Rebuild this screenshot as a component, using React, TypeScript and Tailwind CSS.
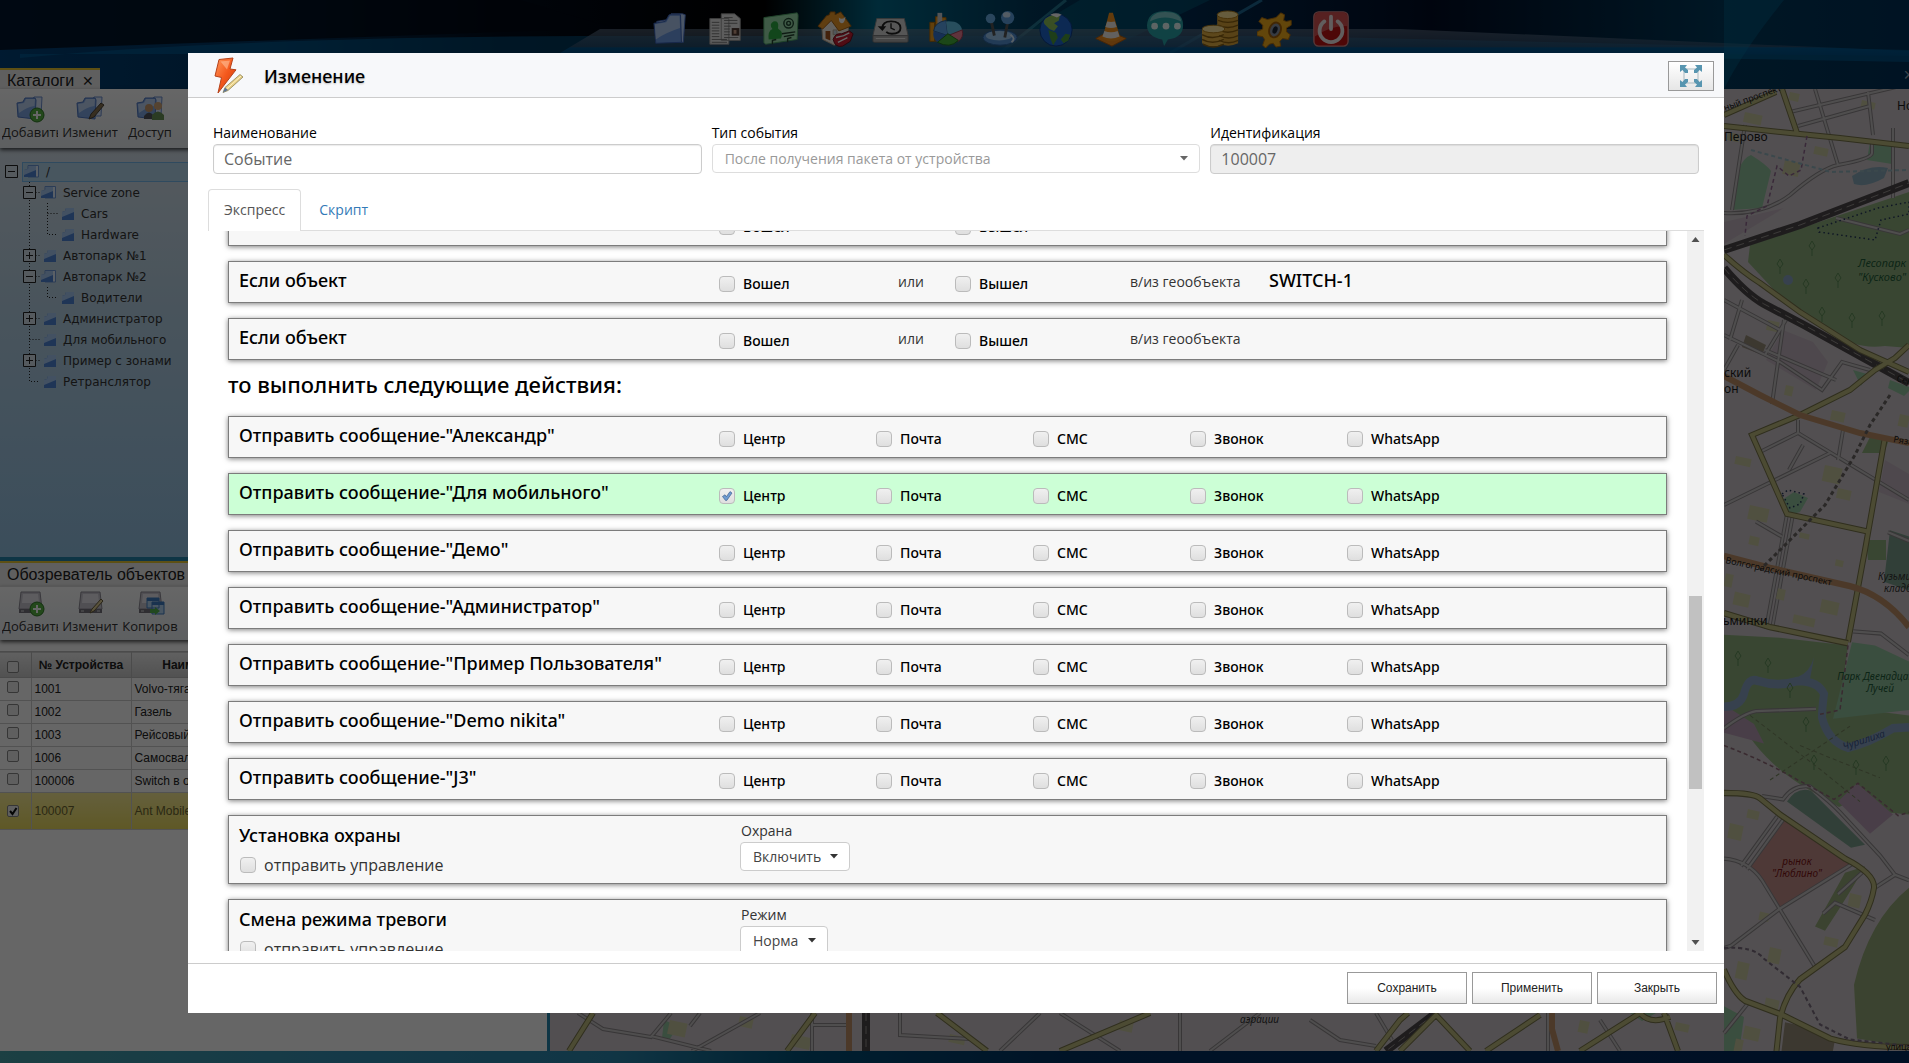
import type { ReactNode } from "react";
import clsx from "clsx";

const CHANNELS = ["Центр", "Почта", "СМС", "Звонок", "WhatsApp"];

const RECIPIENTS = [
  { name: "Александр", checked: [] as string[] },
  { name: "Для мобильного", checked: ["Центр"] },
  { name: "Демо", checked: [] },
  { name: "Администратор", checked: [] },
  { name: "Пример Пользователя", checked: [] },
  { name: "Demo nikita", checked: [] },
  { name: "J3", checked: [] },
];

const DEVICES = [
  { id: "1001", name: "Volvo-тягач" },
  { id: "1002", name: "Газель" },
  { id: "1003", name: "Рейсовый" },
  { id: "1006", name: "Самосвал" },
  { id: "100006", name: "Switch в офисе" },
  { id: "100007", name: "Ant Mobile", selected: true },
];

export default function App() {
  return (
    <div className="relative flex h-screen flex-col overflow-hidden bg-[#00172e] font-['Open_Sans',sans-serif] text-sm text-black">
      <Wallpaper />
      <Dock />
      <div className="relative isolate flex min-h-0 flex-1">
        <div className="flex w-[547px] shrink-0 flex-col">
          <Catalogs />
          <ObjectBrowser />
        </div>
        <div className="mt-[29px] w-[3px] shrink-0 bg-[#2585ad]" />
        <div className="flex min-w-0 flex-1 flex-col">
          <div className="flex h-[29px] items-center justify-end font-['Liberation_Sans',sans-serif] text-lg text-white/60">
            <button className="-mr-[5px]" aria-label="Закрыть карту">
              ×
            </button>
          </div>
          <CityMap />
        </div>
      </div>
      <div className="h-3 shrink-0" />

      <div className="absolute inset-0 flex bg-black/60 pt-[53px] pr-[185px] pb-[50px] pl-[188px]">
        <EventDialog />
      </div>
    </div>
  );
}

/* ---------- dialog ---------- */

function EventDialog() {
  return (
    <div role="dialog" aria-labelledby="dialog-title" className="flex min-w-0 flex-1 flex-col bg-white">
      <header className="flex h-[45px] shrink-0 items-center border-b border-[#ccc] bg-[#f7f8fa] pt-[2px] pr-[10px] pl-6">
        <BoltIcon />
        <h1
          id="dialog-title"
          className="ml-[18px] flex-1 font-['Noto_Sans',sans-serif] text-lg leading-6 font-medium [text-shadow:0_1px_2px_rgba(0,0,0,0.25)]"
        >
          Изменение
        </h1>
        <button
          aria-label="Развернуть"
          className="flex h-[30px] w-[46px] items-center justify-center border border-[#999] bg-linear-to-b from-white to-[#e6e6e6]"
        >
          <ExpandIcon />
        </button>
      </header>

      <form className="flex min-h-0 flex-1 flex-col" onSubmit={(e) => e.preventDefault()}>
        <div className="grid grid-cols-3 gap-[10px] px-[25px] pt-[25px]">
          <div>
            <label htmlFor="name" className="mb-px block leading-5">
              Наименование
            </label>
            <input
              id="name"
              defaultValue="Событие"
              className="h-[30px] w-full rounded-sm border border-[#ccc] px-[10px] text-base text-[#666] shadow-[inset_0_1px_1px_rgba(0,0,0,0.08)]"
            />
          </div>
          <div>
            <label htmlFor="type" className="mb-px block leading-5">
              Тип события
            </label>
            <div className="relative">
              <select
                id="type"
                className="h-[29px] w-full appearance-none rounded-sm border border-[#ddd] bg-white px-3 text-[#999]"
              >
                <option>После получения пакета от устройства</option>
              </select>
              <Caret className="absolute top-3 right-3 text-[#666]" />
            </div>
          </div>
          <div>
            <label htmlFor="ident" className="mb-px block leading-5">
              Идентификация
            </label>
            <input
              id="ident"
              defaultValue="100007"
              readOnly
              className="h-[30px] w-full rounded-sm border border-[#ccc] bg-[#eee] px-[10px] text-base text-[#666] shadow-[inset_0_1px_1px_rgba(0,0,0,0.08)]"
            />
          </div>
        </div>

        <div role="tablist" className="mx-5 mt-[15px] flex h-[42px] shrink-0 border-b border-[#ddd]">
          <button
            role="tab"
            aria-selected="true"
            className="-mb-px rounded-t-sm border border-b-0 border-[#ddd] bg-white px-[15px] pb-[2px] text-[#555]"
          >
            Экспресс
          </button>
          <button role="tab" aria-selected="false" className="ml-[2px] px-4 text-[#337ab7]">
            Скрипт
          </button>
        </div>

        <div className="mx-5 mb-3 flex min-h-0 flex-1">
          <div className="min-w-0 flex-1 overflow-hidden px-5">
            <div className="-mt-[27px] flex flex-col gap-[15px]">
              <ConditionRow />
              <ConditionRow zone="SWITCH-1" />
              <ConditionRow />
            </div>
            <h2 className="h-14 pt-2 font-['Noto_Sans',sans-serif] text-[22px] leading-8 font-medium">
              то выполнить следующие действия:
            </h2>
            <div className="flex flex-col gap-[15px]">
              {RECIPIENTS.map((r) => (
                <MessageRow key={r.name} name={r.name} checked={r.checked} />
              ))}
              <ControlRow title="Установка охраны" label="Охрана" value="Включить" id="guard" width="w-[110px]" />
              <ControlRow title="Смена режима тревоги" label="Режим" value="Норма" id="mode" width="w-[88px]" />
            </div>
          </div>
          <ScrollTrack />
        </div>

        <footer className="flex shrink-0 justify-end gap-[5px] border-t border-[#ccc] py-2 pr-[7px] pb-[9px] font-['Liberation_Sans',sans-serif] text-xs">
          {["Сохранить", "Применить", "Закрыть"].map((t) => (
            <button
              key={t}
              className="h-8 w-[120px] border border-[#999] bg-linear-to-b from-white from-50% to-[#e9e9e9] text-[#222]"
            >
              {t}
            </button>
          ))}
        </footer>
      </form>
    </div>
  );
}

function Card({ className, children }: { className?: string; children: ReactNode }) {
  return (
    <div
      className={clsx(
        "grid shrink-0 border border-[#7c7c7c] pr-[5px] pl-[10px] shadow-[0_1px_5px_rgba(0,0,0,0.5)]",
        className,
      )}
    >
      {children}
    </div>
  );
}

function CardTitle({ children }: { children: ReactNode }) {
  return <p className="pb-1 font-['Noto_Sans',sans-serif] text-lg leading-6 font-medium">{children}</p>;
}

function ConditionRow({ zone }: { zone?: string }) {
  return (
    <Card className="h-[42px] grid-cols-[480px_179px_57px_175px_139px_1fr] items-center bg-[#f7f7f7]">
      <CardTitle>Если объект</CardTitle>
      <Check label="Вошел" />
      <span className="text-[#333]">или</span>
      <Check label="Вышел" />
      <span className="text-[#333]">в/из геообъекта</span>
      <CardTitle>{zone}</CardTitle>
    </Card>
  );
}

function MessageRow({ name, checked }: { name: string; checked: string[] }) {
  return (
    <Card
      className={clsx(
        "h-[42px] grid-cols-[480px_repeat(6,minmax(0,1fr))] items-center",
        checked.length ? "bg-[#ccffd6]" : "bg-[#f7f7f7]",
      )}
    >
      <CardTitle>Отправить сообщение-"{name}"</CardTitle>
      {CHANNELS.map((c) => (
        <Check key={c} label={c} checked={checked.includes(c)} />
      ))}
    </Card>
  );
}

function ControlRow(props: { title: string; label: string; value: string; id: string; width: string }) {
  return (
    <Card className="h-[69px] grid-cols-[501px_1fr] bg-[#f7f7f7]">
      <div className="pt-[7px]">
        <CardTitle>{props.title}</CardTitle>
        <label className="mt-[2px] flex items-center gap-2 pl-px text-base leading-6 text-[#333]">
          <Tick />
          отправить управление
        </label>
      </div>
      <div className="pt-[5px]">
        <label htmlFor={props.id} className="block pl-px leading-5 text-[#333]">
          {props.label}
        </label>
        <div className={clsx("relative mt-px", props.width)}>
          <select
            id={props.id}
            className="h-[29px] w-full appearance-none rounded-sm border border-[#ccc] bg-white px-3 text-[#444]"
          >
            <option>{props.value}</option>
          </select>
          <Caret className="absolute top-3 right-3 text-[#333]" />
        </div>
      </div>
    </Card>
  );
}

function Check({ label, checked }: { label: string; checked?: boolean }) {
  return (
    <label className="flex items-center gap-2 pt-[3px] font-['Noto_Sans',sans-serif] leading-5 font-medium">
      <Tick checked={checked} />
      {label}
    </label>
  );
}

function Tick({ checked }: { checked?: boolean }) {
  return (
    <span className="grid shrink-0">
      <input
        type="checkbox"
        defaultChecked={checked}
        className="peer col-start-1 row-start-1 size-4 appearance-none rounded-sm border border-[#bbb] bg-linear-to-b from-[#f0f0f0] to-[#dfdfdf]"
      />
      <svg
        viewBox="0 0 16 16"
        className="pointer-events-none invisible col-start-1 row-start-1 size-4 peer-checked:visible"
      >
        <path d="M3.5 8.5 6 6.8l1.3 2L11 3.6l2 1.4-5.2 7.4H6.500z" fill="#6d9bd1" stroke="#41638f" strokeWidth=".7" />
      </svg>
    </span>
  );
}

function Caret({ className }: { className?: string }) {
  return (
    <svg viewBox="0 0 8 5" className={clsx("pointer-events-none h-[5px] w-2", className)}>
      <path d="M0 0h8L4 4.500z" fill="currentColor" />
    </svg>
  );
}

function ScrollTrack() {
  return (
    <div className="flex w-[17px] shrink-0 flex-col bg-[#f1f1f1]">
      <svg viewBox="0 0 17 17" className="h-[17px] w-[17px]">
        <path d="M4.500 11h8L8.500 6z" fill="#505050" />
      </svg>
      <div className="flex-[348]" />
      <div className="mx-[2px] flex-[193] bg-[#c1c1c1]" />
      <div className="flex-[145]" />
      <svg viewBox="0 0 17 17" className="h-[17px] w-[17px]">
        <path d="M4.500 6h8L8.500 11z" fill="#505050" />
      </svg>
    </div>
  );
}

function BoltIcon() {
  return (
    <svg viewBox="0 0 34 40" className="h-10 w-[34px]">
      <defs>
        <linearGradient id="bolt" x1="0" y1="0" x2="1" y2="1">
          <stop offset="0" stopColor="#ff9a5c" />
          <stop offset=".5" stopColor="#f4581c" />
          <stop offset="1" stopColor="#c93a08" />
        </linearGradient>
      </defs>
      <path d="M7 3.500 21 2l-3 11 6 .8L6 37l3.500-15.500L3 20z" fill="url(#bolt)" stroke="#b5421a" />
      <path d="M8.500 5.500 18 4.500l-3 9z" fill="#ffc09a" opacity=".6" />
      <path d="M28 18.500 31 21 16 34.500l-5 2 2-5z" fill="#e8cf86" stroke="#8d8456" strokeWidth=".8" />
      <path d="M29 20 14 33.500" stroke="#fff3c4" strokeWidth="1" />
      <path d="m11 36.500 2-5 3 2.500z" fill="#5b7396" />
    </svg>
  );
}

function ExpandIcon() {
  return (
    <svg viewBox="0 0 24 24" className="size-6" fill="#5795b0">
      <path d="M5 5h14v14H5z" fill="none" stroke="#a9b9c0" />
      <path d="M1 1h7L6 3.500 9 6v3H6L3.500 6 1 8zM23 1h-7l2 2.500L15 6v3h3l2.500-3L23 8zM1 23h7l-2-2.500L9 18v-3H6l-2.500 3L1 16zM23 23h-7l2-2.500-3-2.500v-3h3l2.500 3 2.500-2z" />
    </svg>
  );
}

/* ---------- left side ---------- */

function ToolButton({ label, children }: { label: string; children: ReactNode }) {
  return (
    <button className="flex w-[60px] flex-col items-center">
      <svg viewBox="0 0 30 28" className="h-7 w-[30px]">
        {children}
      </svg>
      <span className="block max-w-[56px] overflow-hidden text-[13px] leading-[18px] whitespace-nowrap text-[#333]">
        {label}
      </span>
    </button>
  );
}

function Catalogs() {
  return (
    <section className="flex h-[501px] shrink-0 flex-col">
      <div className="flex h-[29px] items-end">
        <h2 className="flex h-[21px] w-[100px] items-center gap-2 border-t-2 border-[#e8c832] bg-[#eee] pt-[2px] pl-[7px] font-['Liberation_Sans',sans-serif] text-base leading-5 text-[#222]">
          Каталоги <button className="text-sm leading-4">✕</button>
        </h2>
      </div>
      <div className="relative z-10 flex h-[59px] shrink-0 bg-linear-to-b from-white to-[#e9eef2] pt-[6px] shadow-[0_2px_4px_rgba(0,0,0,0.7)]">
        <ToolButton label="Добавить">
          <FolderShapes />
          <PlusBadge />
        </ToolButton>
        <ToolButton label="Изменит">
          <FolderShapes />
          <path d="m14 24 2-5L26 8l3 2-10 12z" fill="#8b7350" stroke="#4a4236" />
        </ToolButton>
        <ToolButton label="Доступ">
          <FolderShapes />
          <circle cx="14" cy="13" r="4" fill="#c79a6b" />
          <path d="M9 24v-3q5-7 10 0v3z" fill="#50545c" />
          <circle cx="23" cy="11" r="4" fill="#d5a878" />
          <path d="M17 25v-5q6-7 12 0v5z" fill="#6a9458" />
        </ToolButton>
      </div>
      <div className="flex-1 bg-linear-to-b from-[#d4e0ea] via-[#b6d2e6] via-40% to-[#94c2e4] pt-[13px] font-['DejaVu_Sans',sans-serif] text-xs text-[#333]">
        <ul>
          <TreeRow root open label="/" />
          <TreeRow level={1} toggle="minus" open label="Service zone" />
          <TreeRow level={2} label="Cars" />
          <TreeRow level={2} label="Hardware" last />
          <TreeRow level={1} toggle="plus" label="Автопарк №1" />
          <TreeRow level={1} toggle="minus" open label="Автопарк №2" />
          <TreeRow level={2} label="Водители" last />
          <TreeRow level={1} toggle="plus" label="Администратор" />
          <TreeRow level={1} label="Для мобильного" />
          <TreeRow level={1} toggle="plus" label="Пример с зонами" />
          <TreeRow level={1} label="Ретранслятор" last />
        </ul>
      </div>
      <div className="h-1 shrink-0 bg-[#2585ad]" />
    </section>
  );
}

function TreeRow(props: {
  label: string;
  level?: number;
  toggle?: "plus" | "minus";
  root?: boolean;
  open?: boolean;
  last?: boolean;
}) {
  const { label, level = 0, toggle, root, open, last } = props;
  return (
    <li className="flex h-[21px] items-center">
      {level === 2 && (
        <svg className="h-[21px] w-9 shrink-0" stroke="#222" strokeDasharray="1 2" fill="none">
          <path d="M29.500 0v21" />
        </svg>
      )}
      <svg
        className={clsx("h-[21px] shrink-0", level === 1 ? "w-10" : "w-[22px]")}
        stroke="#222"
        fill="none"
      >
        {level === 1 && (
          <path d={last ? "M29.500 0v10.500H40" : "M29.500 0v21M29.500 10.500H40"} strokeDasharray="1 2" />
        )}
        {level === 2 && <path d={last ? "M11.500 0v10.500H22" : "M11.500 0v21M11.500 10.500H22"} strokeDasharray="1 2" />}
        {root && <path d="M5.500 4.500h12v12h-12zM8 10.500h7" fill="#d4e0ea" />}
        {toggle && <path d="M23.500 4.500h12v12h-12z" fill="#d4e0ea" />}
        {toggle && <path d={toggle === "plus" ? "M26 10.500h7M29.500 7v7" : "M26 10.500h7"} />}
      </svg>
      <span
        className={clsx(
          "flex h-5 flex-1 items-center gap-[6px]",
          root && "border border-[#77b8ee] bg-[#b4d6ee]",
        )}
      >
        <svg viewBox="0 0 17 16" className="h-4 w-[17px]">
          {open ? (
            <>
              <path d="M5 1.500h10.500V13H5z" fill="#e3efff" stroke="#6d96d6" />
              <path d="m1 6 4-1 1-3h7v11H1z" fill="#4f86d6" />
              <path d="m1 6 4-1 1-3h7v4L1 11z" fill="#a9cbf5" />
            </>
          ) : (
            <>
              <path d="m4 6 3-1 1-3h8v12H4z" fill="#4f86d6" />
              <path d="m4 6 3-1 1-3h8v4L4 11z" fill="#a9cbf5" />
            </>
          )}
        </svg>
        {label}
      </span>
    </li>
  );
}

function ObjectBrowser() {
  return (
    <section className="flex min-h-0 flex-1 flex-col bg-white">
      <h2 className="h-[25px] shrink-0 border-t-2 border-[#e8c832] bg-[#eee] pl-[7px] font-['Liberation_Sans',sans-serif] text-base leading-6 text-[#222]">
        Обозреватель объектов
      </h2>
      <div className="flex h-[54px] shrink-0 border-t border-[#ddd] bg-linear-to-b from-white to-[#e9eef2] pt-[2px] shadow-[0_2px_4px_rgba(0,0,0,0.7)]">
        <ToolButton label="Добавить">
          <DeviceShape />
          <PlusBadge />
        </ToolButton>
        <ToolButton label="Изменит">
          <DeviceShape />
          <path d="m15 24 2-4 9-10 2 2-9 10z" fill="#e2cf96" stroke="#665b3c" />
        </ToolButton>
        <ToolButton label="Копиров">
          <DeviceShape />
          <path d="M12 9h12v10H12zM17 13h12v12H17z" fill="#b7d6f5" stroke="#3f7ec4" />
          <path d="M12 9h12v3H12zM17 13h12v3H17z" fill="#3f7ec4" />
          <path d="M15 20h5v-2l5 4-5 4v-2h-5z" fill="#54b34e" />
        </ToolButton>
      </div>
      <table className="mt-[11px] w-full table-fixed border-collapse text-left font-['Liberation_Sans',sans-serif] text-xs text-[#222]">
        <thead>
          <tr className="h-[26px] border-y border-[#bbb] bg-linear-to-b from-[#f0f0f0] to-[#ccc]">
            <th className="w-[31px] pt-1 pl-[7px]">
              <DeviceCheck label="Все устройства" />
            </th>
            <th className="w-[100px] border-x border-[#bbb] text-center">№ Устройства</th>
            <th className="w-[150px] text-center">Наименование</th>
            <th />
          </tr>
        </thead>
        <tbody>
          {DEVICES.map((d) => (
            <tr
              key={d.id}
              className={clsx(
                "border-b border-[#ccc]",
                d.selected ? "h-[37px] bg-linear-to-b from-[#fbee97] to-[#eddd5e] text-[#6b6530]" : "h-[23px]",
              )}
            >
              <td className={clsx("pl-[7px]", d.selected ? "pt-0" : "pb-[5px]")}>
                <DeviceCheck label={d.id} checked={d.selected} />
              </td>
              <td className="border-x border-[#ccc] pl-[3px]">{d.id}</td>
              <td className="pl-[3px] whitespace-nowrap">{d.name}</td>
              <td />
            </tr>
          ))}
        </tbody>
      </table>
    </section>
  );
}

function DeviceCheck({ label, checked }: { label: string; checked?: boolean }) {
  return (
    <span className="grid w-3">
      <input
        type="checkbox"
        aria-label={label}
        defaultChecked={checked}
        className="peer col-start-1 row-start-1 size-3 appearance-none rounded-xs border border-[#888] bg-[#ededed]"
      />
      <svg viewBox="0 0 12 12" className="pointer-events-none invisible col-start-1 row-start-1 size-3 peer-checked:visible">
        <path d="m3 6 2.500 3L9.500 3" fill="none" stroke="#111" strokeWidth="2" />
      </svg>
    </span>
  );
}

function FolderShapes() {
  return (
    <g>
      <path d="M9 5h8l2-3h8l-1 19H9z" fill="#dbe9ff" stroke="#6d8fd0" />
      <path d="m2 8 6-1 2-4h10l1 2-1 19-17-2z" fill="#7fa8e6" stroke="#4f77c4" />
      <path d="m3 9 6-1 2-4h9l-.5 7Q12 12 4 18z" fill="#cfe0fa" opacity=".8" />
    </g>
  );
}

function PlusBadge() {
  return (
    <g>
      <circle cx="22" cy="20" r="7" fill="#58b544" stroke="#2f7a26" />
      <path d="M22 16v8M18 20h8" stroke="#fff" strokeWidth="2" />
    </g>
  );
}

function DeviceShape() {
  return (
    <g>
      <path d="M6 3h19l2 17H4z" fill="#c9c6d0" stroke="#8f8c96" />
      <path d="M8 5h15l1 9H7z" fill="#e9e7ee" />
      <path d="M4 20h23v4H4z" fill="#77747e" />
      <path d="M6 22h3M22 22h3" stroke="#ddd" />
    </g>
  );
}

/* ---------- desktop ---------- */

function Wallpaper() {
  return (
    <svg viewBox="0 0 1909 1063" preserveAspectRatio="none" className="absolute inset-0 h-full w-full">
      <defs>
        <linearGradient id="sky" x1="0" x2="1">
          <stop offset="0" stopColor="#00427a" />
          <stop offset=".14" stopColor="#003560" />
          <stop offset=".26" stopColor="#000c1c" />
          <stop offset=".4" stopColor="#000" />
          <stop offset=".46" stopColor="#006a8c" />
          <stop offset=".54" stopColor="#003a5c" />
          <stop offset=".62" stopColor="#002b52" />
          <stop offset=".75" stopColor="#000c24" />
          <stop offset=".9" stopColor="#003a5c" />
          <stop offset="1" stopColor="#003058" />
        </linearGradient>
        <linearGradient id="glass" x1="0" y1="0" x2="0" y2="1">
          <stop offset="0" stopColor="#6a7d92" stopOpacity=".6" />
          <stop offset=".65" stopColor="#3d5878" stopOpacity=".6" />
          <stop offset=".7" stopColor="#005a96" stopOpacity=".8" />
          <stop offset="1" stopColor="#005088" stopOpacity=".8" />
        </linearGradient>
        <linearGradient id="floor" x1="0" x2="1">
          <stop offset="0" stopColor="#46a0a8" />
          <stop offset=".18" stopColor="#3590b4" />
          <stop offset=".32" stopColor="#2a86ac" />
          <stop offset=".42" stopColor="#005078" />
          <stop offset=".56" stopColor="#003060" />
          <stop offset="1" stopColor="#00285a" />
        </linearGradient>
      </defs>
      <rect width="1909" height="90" fill="url(#sky)" />
      <path d="M1080 0h130l-110 53H990z" fill="#007a96" opacity=".35" />
      <path d="m1066 0-66 53" stroke="#3aa0b8" strokeWidth="3" opacity=".6" />
      <path d="m1262 0-92 53" stroke="#2a86b4" strokeWidth="3" opacity=".7" />
      <path d="M0 0h520l100 30H560L0 50z" fill="#000814" opacity=".75" />
      <path d="M20 58q200-20 560-22h700l629 14v12q-400-8-700-8H20z" fill="#0070b0" opacity=".45" />
      <path d="M600 29h800l509 22v5q-300-3-540-3H560z" fill="url(#glass)" />
      <path d="M1724 89q20-40 60-89h-60z" fill="#0086b4" opacity=".3" />
      <rect y="1051" width="1909" height="12" fill="url(#floor)" />
    </svg>
  );
}

function Dock() {
  const icons = [
    <>
      <path d="M5 12 17 10l3-6h12l3 1-2 29-25-1z" fill="#bcd6ff" stroke="#4a74d0" />
      <path d="m2 14 12-2 4-7h12l1 29-27 1z" fill="#6f9ee8" stroke="#3b62b8" />
      <path d="m3 15 12-2 4-7h10l.5 13Q14 24 4 31z" fill="#c8dcfa" opacity=".75" />
    </>,
    <>
      <path d="M3 9h20v27H3zM15 4h14l6 5v23H15z" fill="#e8e8e8" stroke="#999" />
      <path d="M5 13h8M5 16h8M5 19h8M5 22h8M5 25h8M5 28h8M5 31h16M5 34h16M18 8h9M18 11h14M18 14h14M18 17h7M18 20h6M18 23h6M18 26h6M18 29h15" stroke="#777" />
      <path d="M26 19h8v8h-8z" fill="#4e3a34" />
      <path d="M28 21h3v4h-3z" fill="#c89c84" />
    </>,
    <>
      <path d="m2 8 35-5q1 1 1 3l-1 25-33 5q-1 0-2-2z" fill="#9fe0b0" stroke="#4fa868" />
      <path d="M7 31q-1-9 4-11-4-5 1-8 6-1 5 6-1 2 3 4 2 3 0 8z" fill="#2fae44" />
      <circle cx="28" cy="14" r="5" fill="none" stroke="#234b35" strokeWidth="1.500" />
      <circle cx="28" cy="14" r="2" fill="none" stroke="#234b35" strokeWidth="1.500" />
      <path d="m21 25 14-2M23 28l11-2M11 36v-4l4-1M27 34v-4l4-1" fill="none" stroke="#24432f" strokeWidth="1.500" />
    </>,
    <>
      <path d="m5 17 12-8 16 8v14l-15 6-12-6z" fill="#f8f2e8" stroke="#b8a690" />
      <path d="m1 17 9-11 3-1 1-3h5v3l6-3 11 15-13 5-8-11-9 9z" fill="#f19c2a" stroke="#a55f10" />
      <path d="M9 22h5v10l-5-2z" fill="#a8561e" />
      <path d="M17 21h4v5h-4z" fill="#c9d6e4" stroke="#b8a690" />
      <path d="M23 8q3 3 7-1-1 7-4 7t-3-6z" fill="#fff" />
      <path d="M17 31q2-7 9-6l8-3 4 3-3 8-8 5q-8 2-10-7z" fill="#c81e32" stroke="#6c0c18" />
      <path d="m20 29 8-2 6-3M22 34l10-5" stroke="#fff" strokeWidth="1.500" />
    </>,
    <>
      <path d="M5 9h29l4 18H1z" fill="#d8d8d8" stroke="#8c8c8c" />
      <path d="M1 27h37v6q0 1-2 1H3q-2 0-2-1z" fill="#b0b0b0" stroke="#777" />
      <path d="M4 30h31" stroke="#eee" />
      <path d="M11 19q0-7 9-7 10 0 10 7 0 6-9 6-4 0-6-2" fill="none" stroke="#222" strokeWidth="2" />
      <path d="m6 17 5 5 4-5z" fill="#222" />
      <path d="M20 14v5l4 2" fill="none" stroke="#222" strokeWidth="1.500" />
    </>,
    <>
      <path d="M3 13h5v20H3zM9 7h5v26H9zM15 8h5v16h-5z" fill="#f3a020" stroke="#aa6508" />
      <path d="M11 3h5v20h-5z" fill="#cfd2d8" />
      <path d="M22 27 7 22q1-9 13-11z" fill="#5ca5ea" stroke="#2c639f" />
      <path d="m22 27-2-15q16-1 17 10z" fill="#65c3e9" />
      <path d="m22 27 15-6q2 8-4 12z" fill="#ee7f96" stroke="#a43c54" />
      <path d="m22 27-11 7q-6-5-4-12z" fill="#3976d2" />
      <path d="m22 25 11 7q-9 9-22 2z" fill="#47b23c" stroke="#23701f" />
    </>,
    <>
      <ellipse cx="19" cy="29" rx="18" ry="8" fill="#5695d8" stroke="#2a5f9c" />
      <ellipse cx="18" cy="27" rx="14" ry="5" fill="#9fcbf3" />
      <path d="m10 13 3 14M27 13l-3 16" stroke="#555" strokeWidth="3" />
      <circle cx="9" cy="9" r="5" fill="#6aaee8" />
      <circle cx="27" cy="8" r="7" fill="#5fa4e4" />
      <ellipse cx="26" cy="5" rx="4" ry="3" fill="#cfe6fb" />
      <path d="M30 26q6 4 1 8" fill="none" stroke="#dcefff" strokeWidth="2" />
    </>,
    <>
      <circle cx="20" cy="21" r="17" fill="#1f68d0" stroke="#0c3a86" />
      <path d="M9 9q8-6 15-3l-1 5-5 3 4 3-4 5-5-2-5-5q-2-3 1-6z" fill="#8ec45a" />
      <path d="m12 21 8 3 2 5-5 8-3-7zM30 25l5 1-2 6-5 3-3-4z" fill="#4c9c40" />
      <path d="M14 5q6-3 12 0l-5 3z" fill="#fff" />
    </>,
    <>
      <path d="m4 30 7-4h16l9 4-15 8z" fill="#ef8a1e" stroke="#b85d0a" />
      <path d="M18 3h4l8 27q-9 6-19 0z" fill="#f7941e" />
      <path d="m16 12-2 6q6 2 12 0l-2-6q-4 1-8 0zM13 22l-2 6q9 4 18 0l-2-6q-7 3-14 0z" fill="#f5f0ea" />
    </>,
    <>
      <path d="M19 1q19 0 19 15 0 13-16 15l-4 7-2-7Q0 28 0 16 1 1 19 1z" fill="#2aa5aa" />
      <path d="M19 2q16 0 17 10-9-4-17-4T3 12Q5 2 19 2z" fill="#a6dfe0" opacity=".7" />
      <g fill="#e8fbfb">
        <circle cx="8" cy="17" r="3.500" />
        <circle cx="20" cy="17" r="3.500" />
        <circle cx="32" cy="17" r="3.500" />
      </g>
    </>,
    <>
      <path d="M16 5v30q12 5 22 0V5z" fill="#dba63a" />
      <path d="M0 20v15q11 7 23 0V20z" fill="#e8b548" />
      <ellipse cx="27" cy="5" rx="11" ry="4" fill="#ffe59a" stroke="#b07c18" />
      <path d="M17 11q10 4 21 0M17 16q10 5 21 0M17 21q10 5 21 0M18 27q10 5 20 0M18 32q10 5 20 0" fill="none" stroke="#8d6212" strokeWidth="1.500" />
      <ellipse cx="12" cy="20" rx="12" ry="4" fill="#ffe9a4" stroke="#b07c18" />
      <path d="M0 26q11 6 23 0M0 31q11 6 23 0M1 36q11 6 22 0" fill="none" stroke="#8d6212" strokeWidth="1.500" />
    </>,
    <>
      <path
        d="m20 8 5-5 4 2-1 6 3 1 5-1 0 5-5 3v4l4 3-2 5-6-1-3 3 1 5-5 1-3-4-4 1-4 4-3-3 2-6-2-3-6-1 0-4 6-3 0-4-4-4 3-4 6 2z"
        fill="#f4ae1c"
        stroke="#b5700a"
      />
      <ellipse cx="19" cy="21" rx="6" ry="8" fill="#8b93a4" stroke="#a5620a" strokeWidth="2" transform="rotate(20 19 21)" />
      <ellipse cx="19" cy="21" rx="2.500" ry="4" fill="#1b2433" transform="rotate(20 19 21)" />
    </>,
    <>
      <rect x="2" y="2" width="36" height="36" rx="5" fill="#c01212" stroke="#d98a8a" strokeWidth="1.500" />
      <path d="M3 7q0-4 4-4h26q4 0 4 4v10Q20 16 3 28z" fill="#e88080" opacity=".6" />
      <path d="M13 12a12 12 0 1 0 14 0" fill="none" stroke="#f3eaea" strokeWidth="4" strokeLinecap="round" />
      <path d="M20 7v13" stroke="#f3eaea" strokeWidth="4" strokeLinecap="round" />
    </>,
  ];
  return (
    <nav className="relative flex h-[60px] shrink-0 justify-center gap-[17px] pt-[10px] pl-[93px]">
      {icons.map((icon, i) => (
        <button key={i} className="size-[38px]">
          <svg viewBox="0 0 40 40" className="size-full">
            {icon}
          </svg>
        </button>
      ))}
    </nav>
  );
}

/* ---------- map ---------- */

type Layer = { blocks: number[][]; white: string[]; yellow: string[]; orange: string[]; rails: string[] };

const NORTH: Layer = {
  blocks: [
    [1745, 112, 18, 10], [1790, 92, 10, 8], [1862, 100, 14, 7], [1815, 146, 14, 8], [1785, 160, 16, 14], [1728, 132, 12, 8],
    [1768, 320, 12, 10], [1786, 385, 8, 10], [1832, 410, 14, 10], [1900, 414, 10, 12], [1825, 465, 18, 16], [1838, 488, 14, 10],
    [1750, 505, 20, 14], [1736, 456, 16, 8],
    [670, 1020, 18, 14], [740, 1016, 14, 10], [792, 1034, 20, 12], [1580, 1020, 10, 12], [1676, 1022, 14, 8],
    [950, 1034, 16, 8], [1120, 1020, 14, 10],
  ],
  white: [
    "M1815 89 1838 165", "M1724 213q40 2 66-18 30-26 48-30 34-6 34-12v-10", "M1790 112 1909 84", "M1798 126 1870 106",
    "M1745 125 1732 210", "M1868 92 1873 135M1893 128v70", "M1836 218 1900 234 1909 230", "M1724 335 1780 362 1822 390 1842 362 1870 370",
    "M1738 345 1724 370", "M1724 300 1780 330M1742 300 1730 340M1786 320 1765 355M1765 350 1836 380M1784 320 1772 404",
    "M1724 505 1830 453M1760 452 1798 433 1909 500", "M1798 420v13M1843 430l-5 30M1803 445l-14 25", "M1787 514 1766 629M1793 514 1772 629",
    "M578 1013l25 16 48 8 20-24M651 1036l60 15M760 1013 692 1051M690 1026 700 1013M812 1025h36M812 1013v38",
    "M900 1013v22l70 4", "M1310 1020 1340 1040 1376 1046M1376 1013 1392 1040M1548 1013v38M1600 1020 1620 1051",
    "M1000 1051 1040 1013M1060 1013 1120 1051M1180 1013v38M1210 1051 1260 1013",
  ],
  yellow: [
    "M1724 115 1776 92", "M1724 126 1790 133 1840 138 1909 146", "M1782 89 1797 133", "M1724 255q20 18 36 28l40 29 60 38 49 22",
    "M1909 345l-14 13-20 12-25 20-50 25-48 20 35 79 83 18", "M1885 437l-20 113-17 92",
    "M593 1013l-24 38M815 1013l-28 38M937 1013l50 38", "M1376 1051 1400 1020 1408 1013M1400 1051l36-36 34 36M1486 1051l54-36M1640 1013q10 12 30 4M1580 1051l60-38M1664 1013l14 38",
    "M1060 1051 1150 1013",
  ],
  orange: ["M1724 376l36 19 40 20 60 18 49 10", "M849 1013v38", "M1552 1013v16l6 22"],
  rails: ["M1724 250 1800 225 1909 183", "M1724 268q22 26 40 36l40 21 105 58", "M866 1013v38", "M1436 1013l-50 38"],
};

const SOUTH: Layer = {
  blocks: [
    [1794, 606, 22, 8], [1822, 592, 18, 12], [1778, 582, 8, 10], [1726, 568, 8, 12], [1735, 585, 16, 12], [1750, 533, 10, 8],
    [1800, 530, 10, 5], [1836, 555, 8, 6], [1730, 800, 14, 14], [1748, 787, 12, 8], [1850, 865, 12, 12], [1760, 882, 10, 8],
    [1825, 905, 14, 8], [1738, 928, 12, 16], [1770, 915, 12, 14], [1745, 988, 16, 12], [1766, 962, 14, 12], [1736, 1000, 8, 12],
  ],
  white: [
    "M1756 520 1782 534M1888 530 1909 538M1853 622l28 2 28 20", "M1724 712q20-14 32-16l60-2", "M1762 775l21 3q10-14 27-12 20 14 30 24l40 40 15 18 14 5",
    "M1777 794l-36 46M1783 797l-36 46", "M1724 833q25 2 38 20l54 82M1852 838l-73 42-48 34-7 2", "M1895 848 1875 860M1875 890l-40-16-12 10M1862 846l-24 20",
    "M1750 965 1724 995M1700 1013l24 38",
  ],
  yellow: [
    "M1724 605l46 13 78 15", "M1724 772q30 0 36 5l20 15 65 41q30 14 29 27-2 12-9 25l-20 30-45 30q-14 14-20 36l-8 70",
    "M1724 936q10 22 21 29l37 13 48 22q30 8 79 8",
  ],
  orange: ["M1724 552l46 11 80 17q34 8 59 38"],
  rails: [],
};

function Streets({ blocks, white, yellow, orange, rails }: Layer) {
  return (
    <>
      <g fill="#c9c7a0">
        {blocks.map(([x, y, w, h]) => (
          <rect key={`${x}-${y}`} x={x} y={y} width={w} height={h} transform={`rotate(12 ${x} ${y})`} />
        ))}
      </g>
      <path d={white.join("")} stroke="#8d888b" strokeWidth="4" />
      <path d={white.join("")} stroke="#c6c3c4" strokeWidth="2" />
      <path d={rails.join("")} stroke="#4c484a" strokeWidth="8" />
      <path d={rails.join("")} stroke="#97928f" strokeWidth="1" strokeDasharray="8 5" />
      <path d={yellow.join("")} stroke="#77744a" strokeWidth="6" />
      <path d={yellow.join("")} stroke="#bfbb80" strokeWidth="4" />
      <path d={orange.join("")} stroke="#be9068" strokeWidth="6" />
    </>
  );
}

function CityMap() {
  return (
    <div className="relative min-h-0 flex-1 bg-[#cdc6ca]">
      <svg
        viewBox="550 89 1359 962"
        preserveAspectRatio="xMaxYMax slice"
        className="absolute inset-0 h-full w-full font-['Noto_Sans',sans-serif]"
        fill="none"
      >
        <path d="M1748 262l2-17 90-30 69-23v156l-24-2q-30 4-50-14l-50-30z" fill="#8fb07e" />
        <path d="M1870 437h20l-6 16h-22zM1866 540h20v20h-18z" fill="#8fb07e" />
        <path
          d="M1731 210q4-50 20-55 16 10 20 16l-9 37zM1870 142l22 4v18l-25-4zM1782 500l12-8 14 6-8 14-14 4zM1890 380l22 8-8 8-16-8zM1853 370l14 4-6 12zM664 1020l14 6-10 16-6-4zM1630 1013h26l-14 8z"
          fill="#92c29e"
        />
        <path d="M1783 330l30 12 15 20-12 28-50-30zM1885 460l24 14v30l-30-12zM1724 222l60-14-60 36z" fill="#c4b4c0" />
        <path d="M1746 335l20 10-4 10-20-8z" fill="#978c78" />
        <path d="M1852 176q18-12 36-8l-4 10q-18 10-30 6z" fill="#8aabbc" />
        <circle cx="1788" cy="280" r="5" fill="#8aa4c2" />
        <Streets {...NORTH} />

        <g transform="translate(0 -38.500) scale(1 1.077)">
          <path d="M1724 625l56 3 68 7-8 57 69 8v92l-24-2q-20-16-46-5l-30-16q-40-22-60-50l-25-25z" fill="#8fb07e" />
          <path d="M1909 860q-40 30-55 90l3 50 52 8zM1865 840q-16 26-40 60l-10-4 30-50z" fill="#94a878" />
          <path d="M1852 632l23 3 34 15v45l-76 8 5-18z" fill="#92c29e" />
          <path d="M1724 970l20 10-6 40-14 10z" fill="#92c29e" />
          <path d="M1787 780q10-14 24-10l54 50-14 3zM1890 528l19 6v50l-25-8z" fill="#7c9f8c" />
          <path d="M1783 797l69 41-72 40-30-38z" fill="#c48e8a" />
          <path d="M1838 780l19-17 36 29-23 18zM1724 690l30 18 10 18-40-10z" fill="#b79cb4" />
          <path d="M1785 985l30 6 20 10-6 30h-50z" fill="#978c78" />
          <path
            d="M1724 692q16 0 20-12 4-16 14-12 20 6 40 0 20 0 26 12-2 14-2 22 6 22 26 28 20-4 45-18l16-1"
            stroke="#8aa4c2"
            strokeWidth="8"
          />
          <path d="M1798 664q12-4 16-18l-4 20z" fill="#8aa4c2" />
          <Streets {...SOUTH} />
          <g strokeDasharray="4 3">
            <path d="M1724 728q40 14 70 30l40 20 24-15 40 30 11-3M1848 635l-8 60-20 4" stroke="#8f6a78" strokeWidth="1.500" />
            <path d="M1750 700l70 50 40 30M1770 760l80-50M1800 728l80 30" stroke="#76865f" />
            <path d="M1724 916q30-2 40 10l36 26 20 35 30 14 59 6" stroke="#7a6d7e" strokeWidth="2" />
          </g>
        </g>

        <g stroke="#5f8f58" strokeWidth="1">
          {[
            [1780, 268], [1812, 250], [1838, 282], [1806, 288], [1822, 316], [1852, 322], [1882, 320],
            [1738, 660], [1768, 667], [1790, 692], [1806, 726], [1814, 764], [1856, 769], [1886, 765],
          ].map(([x, y]) => (
            <path key={`${x}-${y}`} d={`M${x} ${y}v6M${x} ${y}l-3-4 3-5 3 5z`} />
          ))}
        </g>
        <g strokeDasharray="4 3">
          <path d="M1807 136l-6 34-12 6-12-10-10 40-20 10-2 20" stroke="#8f678e" strokeWidth="1.500" />
          <path d="M1751 150l80 22 78-2" stroke="#93b3be" strokeWidth="2" />
          <path d="M1890 395l-20 30-15 30-30 50-25 25-40 40" stroke="#6a6463" strokeWidth="3" />
        </g>
        <path
          d="M1818 228l60-20 31-6v12l-28 6-6 20-56-8zM1782 494l6-4 16 4-4 10-10 4z"
          stroke="#24355a"
          strokeWidth="1.500"
          strokeDasharray="1.500 3"
        />

        <g fill="#1c1c1c" fontSize="12">
          <text x="1724" y="141">Перово</text>
          <text x="1897" y="110">Новогиреево</text>
          <text x="1724" y="377">ский</text>
          <text x="1724" y="393">он</text>
          <text x="1723" y="625">ьминки</text>
        </g>
        <g fill="#1c1c1c" fontSize="9">
          <text transform="translate(1725 111) rotate(-20)">ный проспект</text>
          <text transform="translate(1725 563) rotate(12)">Волгоградский проспект</text>
          <text transform="translate(1893 442) rotate(10)">Рязанский</text>
          <text transform="translate(1896 381) rotate(15)">Северная</text>
          <text x="1886" y="1050">улица</text>
        </g>
        <g fill="#1f5c38" fontSize="11" fontStyle="italic" textAnchor="middle">
          <text x="1882" y="267">Лесопарк</text>
          <text x="1882" y="281">"Кусково"</text>
          <text x="1880" y="680" fontSize="10">Парк Двенадцати</text>
          <text x="1880" y="692" fontSize="10">Лучей</text>
        </g>
        <g fill="#333" fontSize="10" fontStyle="italic">
          <text x="1878" y="580">Кузьминское</text>
          <text x="1884" y="592">кладбище</text>
          <text x="1240" y="1023">аэрации</text>
        </g>
        <g fill="#7c1414" fontSize="10" fontStyle="italic" textAnchor="middle">
          <text x="1797" y="865">рынок</text>
          <text x="1797" y="877">"Люблино"</text>
        </g>
        <text transform="translate(1844 750) rotate(-18)" fill="#40588c" fontSize="10" fontStyle="italic">
          Чурилиха
        </text>
      </svg>
    </div>
  );
}
